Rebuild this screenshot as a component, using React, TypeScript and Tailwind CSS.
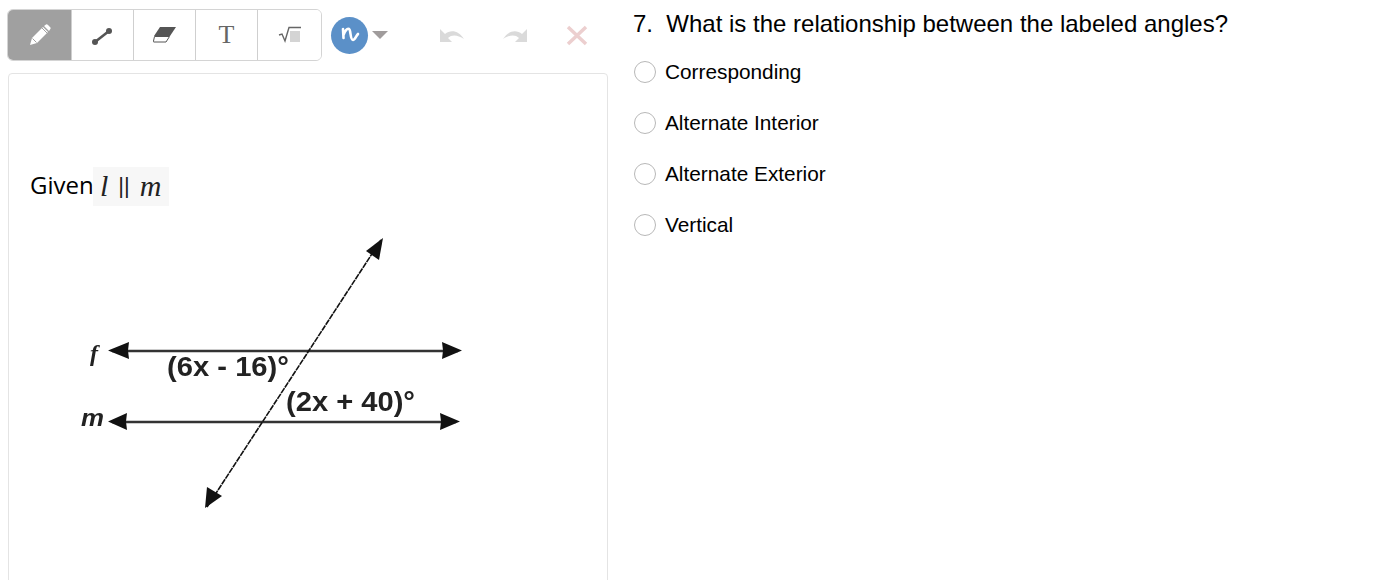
import React from 'react'

const OPTIONS = ['Corresponding', 'Alternate Interior', 'Alternate Exterior', 'Vertical']

function PencilIcon() {
  return (
    <svg width="24" height="24" viewBox="0 0 24 24">
      <path d="M2 22 L4 15 L15 4 L20 9 L9 20 Z" fill="#fff" />
      <path d="M16 3 L18 1.5 Q19 1 20 2 L22.5 4.5 Q23 5.5 22 6.5 L21 8 Z" fill="#fff" />
      <path d="M4.5 15.5 L8.5 19.5" stroke="#a0a0a0" strokeWidth="1" />
      <path d="M14 5 L19 10" stroke="#a0a0a0" strokeWidth="1" />
    </svg>
  )
}

function LineIcon() {
  return (
    <svg width="22" height="20" viewBox="0 0 22 20" className="mt-[3px] -ml-px">
      <path d="M4 15 L18 4" stroke="#555" strokeWidth="2.600" />
      <circle cx="4" cy="15" r="3" fill="#555" />
      <circle cx="18" cy="4" r="3" fill="#555" />
    </svg>
  )
}

function EraserIcon() {
  return (
    <svg width="24" height="18" viewBox="0 0 24 18">
      <path d="M7 1 H23 L17 10 H1 Z" fill="#555" />
      <path d="M1.5 10.5 H16.5 L13 16 H1 Q0 16 0.5 15 Z" fill="#fff" stroke="#555" strokeWidth="1" />
    </svg>
  )
}

function RootIcon() {
  return (
    <svg width="24" height="18" viewBox="0 0 24 18">
      <path d="M1 9 L4 8 L7 15 L11 1.5 H23" fill="none" stroke="#666" strokeWidth="1.4" />
      <rect x="12" y="5" width="10" height="11" fill="#d4d4d4" />
    </svg>
  )
}

function ToolButton({ active, width, children }: { active?: boolean; width: string; children: React.ReactNode }) {
  return (
    <div className={`flex items-center justify-center border-r border-[#cfcfcf] last:border-r-0 ${width} ${active ? 'bg-[#a0a0a0]' : 'bg-white'}`}>
      {children}
    </div>
  )
}

function Figure() {
  return (
    <svg width="400" height="285" viewBox="70 230 400 285" className="block blur-[0.5px]">
      <g stroke="#333" fill="none">
        <path d="M112 351 H458" strokeWidth="2.500" />
        <path d="M112 422 H456" strokeWidth="2.500" />
      </g>
      <path d="M381 240 L207 507" stroke="#111" strokeWidth="1.600" strokeDasharray="6 0.8" />
      <g fill="#111">
        <path d="M108 350.500 L129 342 L128 350.500 L129 359 Z" />
        <path d="M462 350.500 L442 342 L443 350.500 L442 359 Z" />
        <path d="M108 421.500 L127 413 L126 421.500 L127 430 Z" />
        <path d="M460 421.500 L440 413 L441 421.500 L440 430 Z" />
        <path d="M383 238 L366 251 L379 260 Z" />
        <path d="M205 508 L222 496 L207 487 Z" />
      </g>
      <g fontFamily="'Liberation Sans', sans-serif" fontWeight="700" fill="#222">
        <text x="167" y="376" fontSize="28" textLength="122" lengthAdjust="spacingAndGlyphs">(6x - 16)°</text>
        <text x="286" y="411" fontSize="28" textLength="129" lengthAdjust="spacingAndGlyphs">(2x + 40)°</text>
        <text x="90" y="361" fontSize="24" fontStyle="italic" fontFamily="'Liberation Serif', serif">f</text>
        <text x="81" y="426" fontSize="24" fontStyle="italic" textLength="23" lengthAdjust="spacingAndGlyphs">m</text>
      </g>
    </svg>
  )
}

export default function App() {
  return (
    <div className="flex h-[580px] w-[1382px] overflow-hidden bg-white font-['Liberation_Sans',Arial,sans-serif] text-black">
      <div className="w-[633px] shrink-0 pl-2 pt-[9px]">
        <div className="flex items-center">
          <div className="-ml-px flex h-[52px] w-[315px] overflow-hidden rounded-md border border-[#d4d4d4]">
            <ToolButton active width="w-[64px]"><PencilIcon /></ToolButton>
            <ToolButton width="w-[62px]"><LineIcon /></ToolButton>
            <ToolButton width="w-[62px]"><EraserIcon /></ToolButton>
            <ToolButton width="w-[62px]">
              <span className="font-['Liberation_Serif',serif] text-[26px] leading-none text-[#666]">T</span>
            </ToolButton>
            <ToolButton width="flex-1"><RootIcon /></ToolButton>
          </div>
          <div className="ml-[9px] flex h-[37px] w-[37px] items-center justify-center rounded-full bg-[#5b90c8]">
            <svg width="20" height="20" viewBox="0 0 20 20">
              <path d="M3 4 L3.500 13 M3.500 10 C5 6 7 3 9 4 C11 5 10 15 13 15 C15 15 16 11 18 9" fill="none" stroke="#fff" strokeWidth="2.600" strokeLinecap="round" />
            </svg>
          </div>
          <div className="ml-1 h-0 w-0 border-x-8 border-t-8 border-x-transparent border-t-[#a09c9c]" />
          <svg width="26" height="17" viewBox="0 0 26 17" className="ml-[51px]">
            <path d="M1 2 V15 H13 L9 11 C13 7 19 8 25 12 C20 4 12 2 6 7 Z" fill="#dadada" />
          </svg>
          <svg width="26" height="17" viewBox="0 0 26 17" className="ml-[37px]">
            <path d="M25 2 V15 H13 L17 11 C13 7 7 8 1 12 C6 4 14 2 20 7 Z" fill="#dadada" />
          </svg>
          <svg width="22" height="21" viewBox="0 0 22 21" className="ml-[38px]">
            <path d="M2 2 L20 19 M20 2 L2 19" stroke="#eccfcf" strokeWidth="3.500" />
          </svg>
        </div>
        <div className="mt-3 h-[600px] w-[600px] rounded-t border border-[#e4e4e4] pl-[21px] pt-[93px]">
          <div className="flex items-center">
            <span className="-mt-[4px] -mr-px font-['Open_Sans',sans-serif] text-[24px] font-medium leading-[40px] text-black">Given</span>
            <span className="flex h-[39px] w-[76px] items-center justify-center gap-[10px] bg-[#f7f7f7] pb-[3px] font-['Liberation_Serif',serif] text-[30px] text-[#222]">
              <i>l</i><span className="font-['Liberation_Sans',sans-serif] text-[22px]">||</span><i>m</i>
            </span>
          </div>
          <div className="ml-[40px] mt-[24px]"><Figure /></div>
        </div>
      </div>
      <div className="flex-1 pt-[9px]">
        <h1 className="whitespace-pre text-2xl font-normal leading-[30px]">7.  What is the relationship between the labeled angles?</h1>
        <div className="mt-[7px] flex flex-col">
          {OPTIONS.map((option) => (
            <label key={option} className="flex h-[51px] items-center gap-[9px] pl-px">
              <span className="mt-px h-[22px] w-[22px] rounded-full border border-[#b8b8b8] bg-white" />
              <span className="text-[20.8px]">{option}</span>
            </label>
          ))}
        </div>
      </div>
    </div>
  )
}
